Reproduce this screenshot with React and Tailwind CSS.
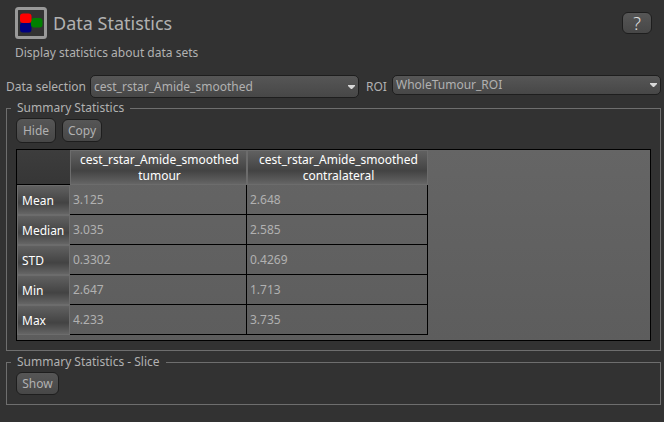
import React from "react";

const columns = [
  ["cest_rstar_Amide_smoothed", "tumour"],
  ["cest_rstar_Amide_smoothed", "contralateral"],
];

const rows = [
  ["Mean", "3.125", "2.648"],
  ["Median", "3.035", "2.585"],
  ["STD", "0.3302", "0.4269"],
  ["Min", "2.647", "1.713"],
  ["Max", "4.233", "3.735"],
];

const buttonStyle =
  "rounded-md border border-[#1e1e1e] bg-linear-to-b from-[#565656] to-[#474747]";

const headerStyle =
  "border-[#6c6c6c] bg-linear-to-b from-[#616161] from-0% via-[#434343] via-60% to-[#656565] to-100% font-normal text-white";

function Logo() {
  return (
    <svg className="size-8 shrink-0" viewBox="0 0 32 32" aria-hidden="true">
      <rect x="1.5" y="1.5" width="29" height="29" rx="2" fill="#323232" stroke="#999999" strokeWidth="3" />
      <rect x="5" y="15.5" width="11.5" height="10" rx="3" fill="#000080" />
      <rect x="16" y="11" width="11.5" height="9.5" rx="3" fill="#008000" />
      <rect x="5" y="6.5" width="11.5" height="9.5" rx="3" fill="#ff0000" />
    </svg>
  );
}

function Dropdown({ id, value, className }) {
  return (
    <div className="relative flex min-w-0 flex-1">
      <select
        id={id}
        defaultValue={value}
        className={`w-full appearance-none rounded-[5px] border border-[#1e1e1e] bg-linear-to-b from-[#565656] to-[#474747] pr-5 pl-[3px] leading-4 text-[#b1b1b1] ${className}`}
      >
        <option>{value}</option>
      </select>
      <svg
        className="pointer-events-none absolute inset-y-0 right-1 my-auto h-1 w-[7px]"
        viewBox="0 0 7 4"
        aria-hidden="true"
      >
        <path d="M0 0H7V1L4 4H3L0 1Z" fill="#d8d8d8" />
      </svg>
    </div>
  );
}

function Group({ title, children }) {
  return (
    <fieldset className="min-w-0 border border-[#6e6e6e] px-[9px] pt-0.5 pb-[9px]">
      <legend className="-ml-[5px] px-1.5 leading-4">{title}</legend>
      {children}
    </fieldset>
  );
}

function StatsTable() {
  return (
    <div className="mt-1.5 border border-black bg-linear-to-b from-[#656565] to-[#5d5d5d] pb-[5px]">
      <table className="w-[411px] table-fixed border-separate border-spacing-0">
        <colgroup>
          <col className="w-[53px]" />
          <col className="w-[177px]" />
          <col className="w-[181px]" />
        </colgroup>
        <thead>
          <tr className="h-[35px]">
            <td className="border-b border-black bg-linear-to-b from-[#3d3d3d] to-[#363636] p-0" />
            {columns.map(([name, region]) => (
              <th key={region} scope="col" className={`border py-0 pr-0 pl-0.5 ${headerStyle}`}>
                <span className="block leading-4">{name}</span>
                <span className="block leading-4">{region}</span>
              </th>
            ))}
          </tr>
        </thead>
        <tbody>
          {rows.map(([label, ...values]) => (
            <tr key={label} className="h-[30px]">
              <th scope="row" className={`border pt-0.5 pr-0 pb-0 pl-1 text-left leading-4 ${headerStyle}`}>
                {label}
              </th>
              {values.map((value, i) => (
                <td key={i} className="border-r border-b border-black py-0 pr-0 pl-[3px] leading-4 text-[#b1b1b1]">
                  {value}
                </td>
              ))}
            </tr>
          ))}
        </tbody>
      </table>
    </div>
  );
}

export default function App() {
  return (
    <main className="min-h-screen bg-[#323232] pt-[7px] pr-[3px] pl-1.5 font-['Noto_Sans',sans-serif] text-[12px] text-[#b1b1b1]">
      <header className="pr-[9px] pl-[9px]">
        <div className="flex items-center gap-1.5">
          <Logo />
          <h1 className="flex-1 text-[18px] leading-6">Data Statistics</h1>
          <button type="button" aria-label="Help" className={`h-[22px] w-[30px] text-[18px] leading-5 font-light text-[#e0e0e0] ${buttonStyle}`}>
            ?
          </button>
        </div>
        <p className="mt-1.5 leading-4">Display statistics about data sets</p>
      </header>

      <div className="mt-3.5 flex h-[23px] items-start leading-6">
        <label htmlFor="data-selection" className="w-[84px] shrink-0 whitespace-nowrap">
          Data selection
        </label>
        <Dropdown id="data-selection" value="cest_rstar_Amide_smoothed" className="h-[23px]" />
        <label htmlFor="roi" className="w-[33px] shrink-0 pl-[7px]">
          ROI
        </label>
        <Dropdown id="roi" value="WholeTumour_ROI" className="h-5" />
      </div>

      <div className="mt-0.5 flex flex-col gap-[3px]">
        <Group title="Summary Statistics">
          <div className="flex h-[25px] items-center gap-1.5">
            <button type="button" className={`h-[25px] w-10 ${buttonStyle}`}>
              Hide
            </button>
            <button type="button" className={`h-[23px] w-10 ${buttonStyle}`}>
              Copy
            </button>
          </div>
          <StatsTable />
        </Group>
        <Group title="Summary Statistics - Slice">
          <button type="button" className={`block h-[23px] w-[43px] ${buttonStyle}`}>
            Show
          </button>
        </Group>
      </div>
    </main>
  );
}
